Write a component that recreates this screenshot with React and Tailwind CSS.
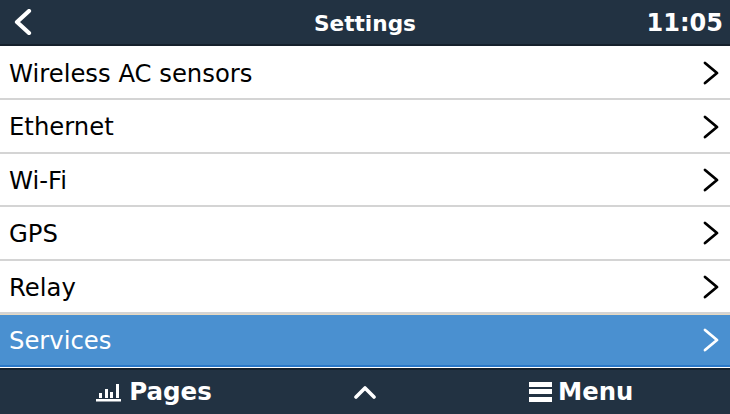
const items = ['Wireless AC sensors', 'Ethernet', 'Wi-Fi', 'GPS', 'Relay'];

function Chevron({ className }) {
  return (
    <svg viewBox="0 0 18 24" className={className} fill="none" stroke="currentColor" strokeWidth="2.8" strokeLinecap="round" strokeLinejoin="round">
      <path d="M3 2 L15 12 L3 22" />
    </svg>
  );
}

function Row({ label, active }) {
  return (
    <div className={active
      ? 'flex h-[53px] items-center justify-between border-b-2 border-t border-[#2a78c8] border-t-[#e6d9c0] bg-[#4a90d0] pl-[9px] pr-[10px] text-white'
      : 'flex h-[53.4px] items-center justify-between border-b-2 border-[#d4d4d4] bg-white pl-[9px] pr-[10px] text-black'}>
      <span className="pt-[3px] text-[24.3px] leading-none">{label}</span>
      <Chevron className="mt-[1px] h-[24px] w-[18px]" />
    </div>
  );
}

export default function App() {
  return (
    <div className="flex h-[414px] w-[730px] flex-col overflow-hidden bg-white font-['DejaVu_Sans',sans-serif]">
      <header className="relative flex h-[46px] shrink-0 items-center justify-between border-b-2 border-[#15202c] bg-[#223242] pl-[14px] pr-[7px] text-white">
        <svg viewBox="0 0 18 26" className="h-[26px] w-[18px]" fill="none" stroke="currentColor" strokeWidth="4.2" strokeLinecap="round" strokeLinejoin="round">
          <path d="M15 2 L3 13 L15 24" />
        </svg>
        <span className="absolute inset-x-0 pt-[3px] text-center text-[21.6px] font-bold leading-none">Settings</span>
        <span className="pt-[2px] text-[24px] font-bold leading-none">11:05</span>
      </header>
      <main className="flex-1 pt-[1px]">
        {items.map((item) => <Row key={item} label={item} />)}
        <Row label="Services" active />
      </main>
      <footer className="flex h-[46px] shrink-0 items-center border-t-2 border-[#15202c] bg-[#223242] text-white">
        <div className="flex w-[243px] items-center justify-center gap-[7px] pl-[65px]">
          <svg viewBox="0 0 26 22" className="h-[22px] w-[26px]" fill="currentColor">
            <rect x="0" y="18" width="25" height="2.5" />
            <rect x="3" y="12" width="3" height="5" />
            <rect x="9" y="8" width="3" height="9" />
            <rect x="14" y="11" width="3" height="6" />
            <rect x="20" y="3" width="3" height="14" />
          </svg>
          <span className="text-[24.5px] font-bold leading-none">Pages</span>
        </div>
        <div className="flex w-[244px] justify-center">
          <svg viewBox="0 0 22 14" className="h-[14px] w-[22px]" fill="none" stroke="currentColor" strokeWidth="3.6" strokeLinecap="round" strokeLinejoin="round">
            <path d="M2 12 L11 3 L20 12" />
          </svg>
        </div>
        <div className="flex w-[243px] items-center gap-[6px] pl-[42px]">
          <div className="flex h-[20px] w-[23px] flex-col justify-between">
            <div className="h-[5px] bg-white" />
            <div className="h-[5px] bg-white" />
            <div className="h-[5px] bg-white" />
          </div>
          <span className="text-[24.3px] font-bold leading-none">Menu</span>
        </div>
      </footer>
    </div>
  );
}
